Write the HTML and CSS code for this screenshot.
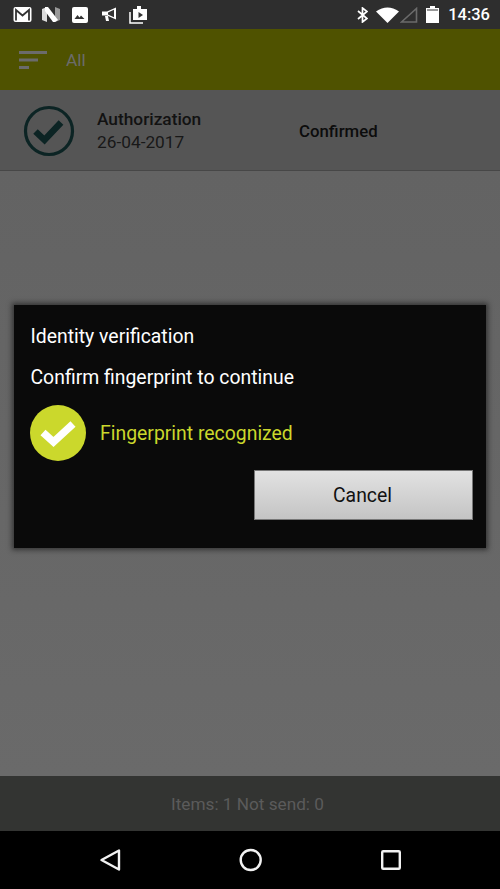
FILE: index.html

```html
<!DOCTYPE html>
<html>
<head>
<meta charset="utf-8">
<title>Authorization</title>
<link rel="stylesheet" href="styles.css">
</head>
<body>
<div class="screen">
	<div class="statusbar">
		<div class="notif">
			<svg width="19" height="17" viewBox="0 0 19 17"><rect x="0.500" y="1" width="18" height="15" rx="2" fill="#fff"/><path d="M3 14.500V4L9.500 9.500 16 4v10.500" fill="none" stroke="#333" stroke-width="1.800"/></svg>
			<svg width="19" height="17" viewBox="0 0 19 17"><path d="M0 3l5-2v15l-5-2z" fill="#ddd"/><path d="M13 1l5 2v11l-5 2z" fill="#999"/><path d="M3 1h3l10 13-3 2h-2L3 5z" fill="#fff"/></svg>
			<svg width="18" height="18" viewBox="0 0 18 18"><rect x="1" y="1" width="16" height="16" rx="2" fill="#fff"/><path d="M3.500 13l3-4 2 2.500 1.500-2 3.500 3.500z" fill="#333"/></svg>
			<svg width="19" height="15" viewBox="0 0 19 15"><path d="M3 4.500h5L17 .5v12L8 8.500H3z" fill="#fff"/><path d="M6 9h3l1 5H7z" fill="#fff"/><path d="M9 5.500l6-2.800v7.600l-6-2.800z" fill="#333"/></svg>
			<svg width="21" height="19" viewBox="0 0 21 19"><path d="M2 7v11h13" fill="none" stroke="#fff" stroke-width="1.500"/><path d="M5 4h4V1h4v3h6v11H5z" fill="#fff"/><path d="M10.500 7l4.500 3-4.500 3z" fill="#333"/></svg>
		</div>
		<div class="sys">
			<svg class="bt" width="11" height="16" viewBox="0 0 11 16"><path d="M1 4l9 7.500L5.500 15V1L10 4.500 1 12" fill="none" stroke="#fff" stroke-width="1.700"/></svg>
			<svg class="wifi" width="23" height="16" viewBox="0 0 23 16"><path d="M0 4.500Q11.500-3.500 23 4.500L11.500 16z" fill="#fff"/></svg>
			<svg class="signal" width="18" height="16" viewBox="0 0 18 16"><path d="M1.500 15L16.500 1.500V15z" fill="none" stroke="#6b6b6b" stroke-width="1.600"/></svg>
			<svg class="batt" width="13" height="17" viewBox="0 0 13 17"><path d="M4 0h5v2h4v15H0V2h4z" fill="#fff"/><rect x="1" y="3" width="11" height="2" fill="#999"/></svg>
			<span class="clock">14:36</span>
		</div>
	</div>

	<div class="toolbar">
		<svg class="sort" width="30" height="20" viewBox="0 0 30 20"><rect x="1" y="1" width="28" height="3" fill="#6b6b6b"/><rect x="1" y="8.500" width="19" height="3" fill="#6b6b6b"/><rect x="1" y="16" width="10" height="3" fill="#6b6b6b"/></svg>
		<span class="filter">All</span>
	</div>

	<div class="row">
		<svg class="ok" width="52" height="52" viewBox="0 0 52 52"><circle cx="26" cy="26" r="23.500" fill="none" stroke="#0c2424" stroke-width="3.200"/><path d="M12.500 26.500l9 8.500L38 17.500" fill="none" stroke="#0c2424" stroke-width="6.500"/></svg>
		<div class="info">
			<div class="title">Authorization</div>
			<div class="date">26-04-2017</div>
		</div>
		<div class="state">Confirmed</div>
	</div>

	<div class="content"></div>

	<div class="footer">Items: 1 Not send: 0</div>

	<div class="navbar">
		<svg width="22" height="24" viewBox="0 0 22 24"><path d="M20 2.500v19L2.500 12z" fill="none" stroke="#f2f2f2" stroke-width="2.400" stroke-linejoin="round"/></svg>
		<svg width="24" height="24" viewBox="0 0 24 24"><circle cx="11.700" cy="12" r="10" fill="none" stroke="#f2f2f2" stroke-width="2.400"/></svg>
		<svg width="22" height="22" viewBox="0 0 22 22"><rect x="2.200" y="2.200" width="17.600" height="17.600" rx="1" fill="none" stroke="#f2f2f2" stroke-width="2.400"/></svg>
	</div>

	<div class="dialog">
		<div class="dlg-title">Identity verification</div>
		<div class="dlg-text">Confirm fingerprint to continue</div>
		<div class="dlg-result">
			<svg width="56" height="56" viewBox="0 0 56 56"><circle cx="28" cy="28" r="28" fill="#cbd82c"/><path d="M13 27.500l10.500 9.500L43 19" fill="none" stroke="#fff" stroke-width="7.500"/></svg>
			<span>Fingerprint recognized</span>
		</div>
		<div class="dlg-actions"><button class="cancel">Cancel</button></div>
	</div>
</div>
</body>
</html>
```

FILE: styles.css

```css
html, body { margin: 0; padding: 0; }
body { font-family: Roboto, "Liberation Sans", sans-serif; background: #000; }
.screen { width: 500px; height: 889px; position: relative; display: flex; flex-direction: column; overflow: hidden; }

.statusbar { height: 29px; background: #2e2e2e; display: flex; justify-content: space-between; align-items: center; flex-shrink: 0; }
.notif { display: flex; align-items: center; margin-left: 13px; gap: 10px; }
.sys { display: flex; align-items: center; margin-right: 10px; }
.bt { margin-right: 8px; }
.wifi { margin-right: 1px; }
.signal { margin-right: 8px; }
.batt { margin-right: 9px; }
.clock { color: #fff; font-size: 16.500px; font-weight: 500; }

.toolbar { height: 61px; background: #4f5200; display: flex; align-items: center; padding-left: 18px; flex-shrink: 0; }
.sort { margin-right: 18px; }
.filter { color: #6b6b6b; font-size: 17.300px; }

.row { height: 78px; background: #555; border-bottom: 1px solid #474747; display: flex; align-items: center; padding: 2px 0 0 23px; flex-shrink: 0; }
.ok { margin-right: 22px; }
.info { width: 202px; }
.title { font-size: 17.300px; font-weight: 500; color: #121212; line-height: 23px; }
.date { font-size: 17.300px; color: #181818; line-height: 23px; }
.state { font-size: 16.800px; font-weight: 500; color: #0c0c0c; }

.content { flex: 1; background: linear-gradient(#636363, #6a6a6a); }
.footer { height: 55px; box-sizing: border-box; padding-right: 5px; background: #333432; color: #5b5b5b; font-size: 17.200px; display: flex; align-items: center; justify-content: center; flex-shrink: 0; }
.navbar { height: 58px; background: #000; display: flex; align-items: center; padding: 0 98px 0 99px; justify-content: space-between; flex-shrink: 0; }

.dialog { position: absolute; left: 14px; top: 305px; width: 472px; height: 243px; box-sizing: border-box; background: #0a0a0a; box-shadow: 0 0 5px 2px rgba(30, 30, 30, 0.7); padding: 21px 13px 0 16.500px; color: #fff; }
.dlg-title { font-size: 19.400px; line-height: 22px; }
.dlg-text { font-size: 19.400px; line-height: 22px; margin-top: 19px; }
.dlg-result { display: flex; align-items: center; margin-top: 16px; margin-left: -0.500px; color: #cbd82c; font-size: 19.400px; }
.dlg-result svg { margin-right: 14px; }
.dlg-result span { padding-top: 1px; }
.dlg-actions { display: flex; justify-content: flex-end; margin-top: 9px; }
.cancel { width: 219px; height: 50px; border: 1px solid #777; background: linear-gradient(#e2e2e2, #c4c4c4); color: #111; font-family: inherit; font-size: 19.400px; padding: 1px 2px 0 0; }
```
